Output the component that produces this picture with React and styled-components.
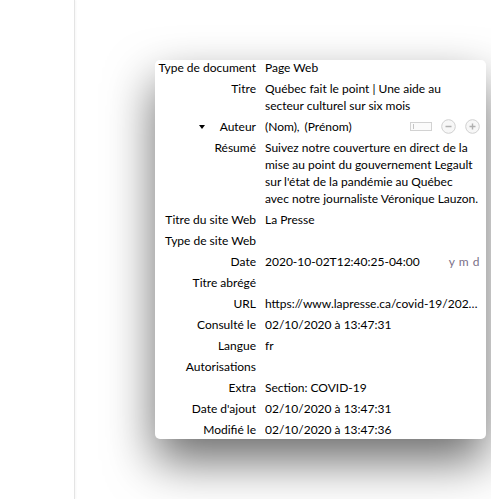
import React from "react";
import styled, { createGlobalStyle } from "styled-components";

const Global = createGlobalStyle`
  html, body { margin: 0; padding: 0; background: #fff; }
  body { font-family: Lato, "Noto Sans", sans-serif; overflow: hidden; }
  #root { height: 499px; }
`;

const Page = styled.div`
  position: relative;
  display: flex;
  height: 499px;
  width: 491px;
  overflow: hidden;
  background: #fff;
`;

const Sidebar = styled.div`
  width: 74px;
  flex: none;
  border-right: 1px solid #e4e4e4;
  box-shadow: 1px 0 2px rgba(0, 0, 0, 0.04);
`;

const Main = styled.div`
  flex: 1;
`;

const Popup = styled.div`
  position: absolute;
  left: 155px;
  top: 60px;
  width: 331px;
  height: 379px;
  background: #fff;
  border-radius: 5px;
  box-shadow: 0 22px 48px rgba(0, 0, 0, 0.58);
  overflow: hidden;
  font-family: Lato, "Noto Sans", sans-serif;
  font-size: 12px;
  color: #000;
`;

const List = styled.div`
  margin-top: -3px;
  padding-right: 6px;
`;

const Row = styled.div`
  display: grid;
  grid-template-columns: 101px 1fr;
  column-gap: 9px;
  padding: 2px 0;
  line-height: 17px;
`;

const Label = styled.div`
  display: flex;
  justify-content: flex-end;
  align-items: center;
  align-self: start;
  white-space: nowrap;
  height: 17px;
`;

const Value = styled.div`
  min-width: 0;
  white-space: ${(p) => (p.$pre ? "pre-line" : "nowrap")};
  overflow: hidden;
  text-overflow: ellipsis;
`;

const FlexValue = styled.div`
  display: flex;
  align-items: center;
  justify-content: space-between;
  min-width: 0;
`;

const Names = styled.div`
  display: flex;
  gap: 5px;
`;

const Controls = styled.div`
  display: flex;
  align-items: center;
  gap: 9px;
`;

const Toggle = styled.div`
  width: 20px;
  height: 7px;
  border: 1px solid #d2d2d2;
  background: #fbfbfb;
  position: relative;
  &::before {
    content: "";
    position: absolute;
    left: 2px;
    top: 1px;
    width: 1px;
    height: 5px;
    background: #c4c4c4;
  }
`;

const Twisty = styled.span`
  display: inline-block;
  width: 0;
  height: 0;
  border-left: 3.5px solid transparent;
  border-right: 3.5px solid transparent;
  border-top: 4px solid #000;
  margin-right: 15px;
`;

const Ymd = styled.span`
  color: #7a7088;
  letter-spacing: 0.5px;
`;

const CircleBtn = ({ plus }) => (
  <svg width="15" height="15" viewBox="0 0 15 15">
    <circle cx="7.5" cy="7.5" r="6.8" fill="#f7f7f7" stroke="#cfcfcf" />
    <line x1="4.5" y1="7.5" x2="10.5" y2="7.5" stroke="#b0b0b0" strokeWidth="1.4" />
    {plus && <line x1="7.5" y1="4.5" x2="7.5" y2="10.5" stroke="#b0b0b0" strokeWidth="1.4" />}
  </svg>
);

const simple = [
  ["Titre du site Web", "La Presse"],
  ["Type de site Web", ""],
];

const after = [
  ["Titre abrégé", ""],
  ["URL", "https://www.lapresse.ca/covid-19/2020-10-02/quebec-fait-le-point"],
  ["Consulté le", "02/10/2020 à 13:47:31"],
  ["Langue", "fr"],
  ["Autorisations", ""],
  ["Extra", "Section: COVID-19"],
  ["Date d'ajout", "02/10/2020 à 13:47:31"],
  ["Modifié le", "02/10/2020 à 13:47:36"],
];

export default function App() {
  return (
    <>
      <Global />
      <Page>
        <Sidebar />
        <Main />
        <Popup>
          <List>
            <Row>
              <Label>Type de document</Label>
              <Value>Page Web</Value>
            </Row>
            <Row>
              <Label>Titre</Label>
              <Value $pre>{"Québec fait le point | Une aide au\nsecteur culturel sur six mois"}</Value>
            </Row>
            <Row>
              <Label>
                <Twisty />
                Auteur
              </Label>
              <FlexValue>
                <Names>
                  <span>(Nom),</span>
                  <span>(Prénom)</span>
                </Names>
                <Controls>
                  <Toggle />
                  <CircleBtn />
                  <CircleBtn plus />
                </Controls>
              </FlexValue>
            </Row>
            <Row>
              <Label>Résumé</Label>
              <Value $pre>
                {
                  "Suivez notre couverture en direct de la\nmise au point du gouvernement Legault\nsur l'état de la pandémie au Québec\navec notre journaliste Véronique Lauzon."
                }
              </Value>
            </Row>
            {simple.map(([l, v]) => (
              <Row key={l}>
                <Label>{l}</Label>
                <Value>{v}</Value>
              </Row>
            ))}
            <Row>
              <Label>Date</Label>
              <FlexValue>
                <span>2020-10-02T12:40:25-04:00</span>
                <Ymd>y m d</Ymd>
              </FlexValue>
            </Row>
            {after.map(([l, v]) => (
              <Row key={l}>
                <Label>{l}</Label>
                <Value>{v}</Value>
              </Row>
            ))}
          </List>
        </Popup>
      </Page>
    </>
  );
}
